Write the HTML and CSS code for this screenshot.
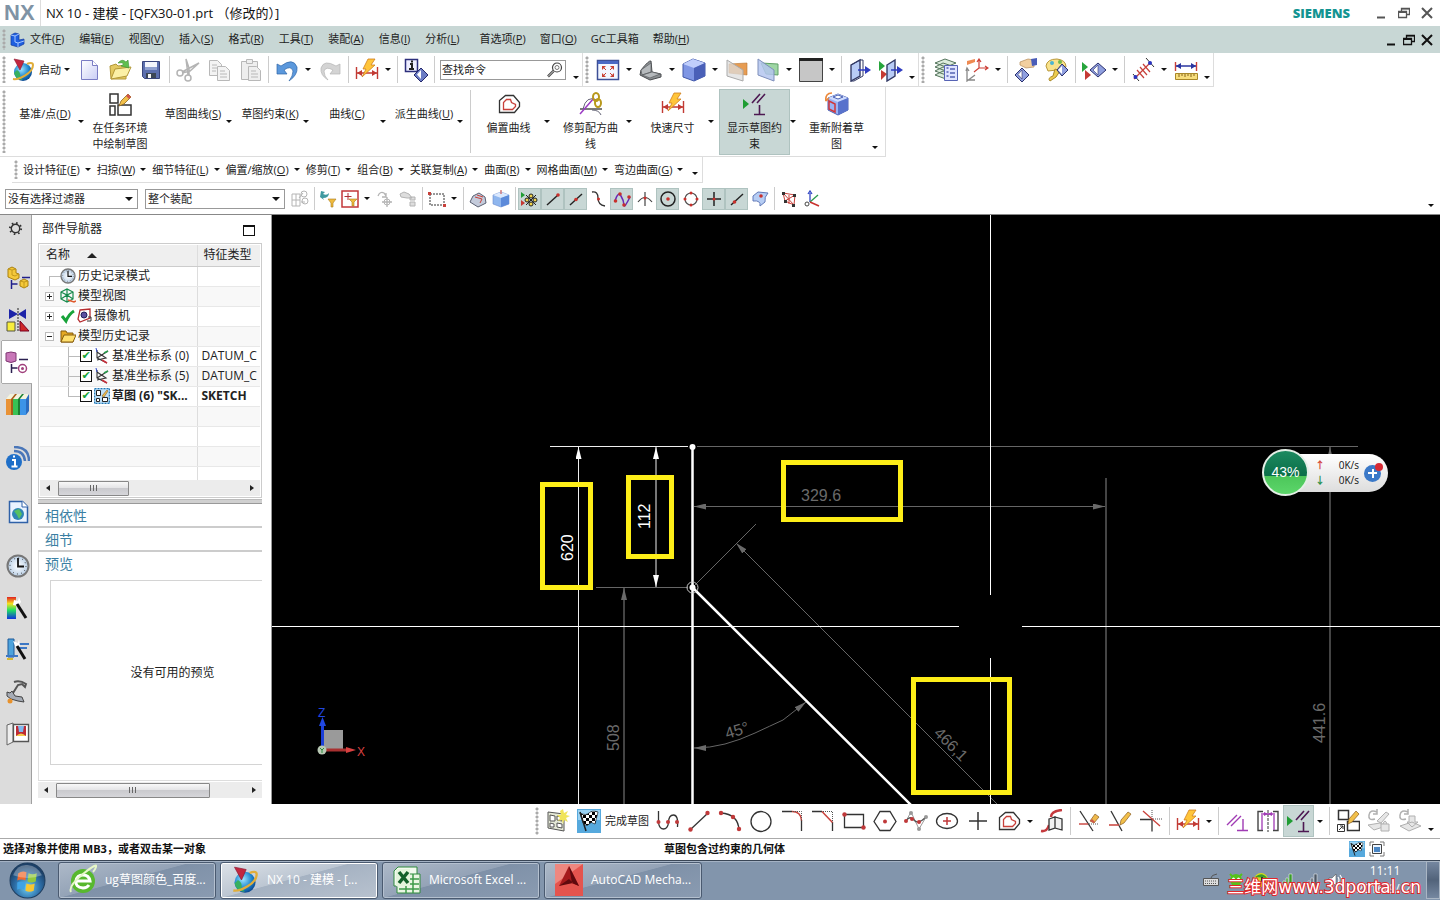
FILE: index.html
```html
<!DOCTYPE html>
<html lang="zh-CN">
<head>
<meta charset="utf-8">
<title>NX 10 - 建模</title>
<link rel="stylesheet" href="styles.css">
</head>
<body>
<svg class="defs" width="0" height="0" aria-hidden="true">
<defs>
<linearGradient id="g-doc" x1="0" y1="0" x2="1" y2="1"><stop offset="0" stop-color="#fff"/><stop offset="1" stop-color="#c9cdf5"/></linearGradient>
<linearGradient id="g-rain" x1="0" y1="0" x2="0" y2="1"><stop offset="0" stop-color="#e02020"/><stop offset=".3" stop-color="#f5e020"/><stop offset=".6" stop-color="#20e060"/><stop offset="1" stop-color="#1030e0"/></linearGradient>
<radialGradient id="g-globe" cx=".4" cy=".35" r=".7"><stop offset="0" stop-color="#9fe6ff"/><stop offset=".6" stop-color="#1d86cf"/><stop offset="1" stop-color="#0a3f85"/></radialGradient>
<radialGradient id="g-start" cx=".5" cy=".7" r=".6"><stop offset="0" stop-color="#6fd0f5"/><stop offset=".6" stop-color="#2d6fa8"/><stop offset="1" stop-color="#1c4068"/></radialGradient>
<radialGradient id="g-clock"><stop offset="0" stop-color="#fff"/><stop offset="1" stop-color="#b9cfe6"/></radialGradient>
<pattern id="p-check" width="6" height="6" patternUnits="userSpaceOnUse"><path fill="#fff" d="M0 0h6v6H0z"/><path d="M0 0h3v3H0zM3 3h3v3H3z"/></pattern>
</defs>
<symbol id="nx" viewBox="0 0 24 24"><circle cx="12" cy="14" r="9" fill="url(#g-globe)"/><path d="M6 12q4 2 3 7l3 3q-7 0-9-7z" fill="#38b060"/><path d="M2 21C8 22 22 15 22 7c0-3-4-2-6-1" fill="none" stroke="#e0ad3a" stroke-width="2"/><path d="M3 1l10 2-4 9z" fill="#c22740" stroke="#8f1730" stroke-width=".6"/></symbol>
<symbol id="part" viewBox="0 0 16 16"><path d="M2 3l4-2 4 1v6l5-1v5l-6 3-7-2z" fill="#1e5fe0" stroke="#143a9c" stroke-width=".7"/><path d="M2 3l4 1 4-2M6 4v6l3 1 6-2M9 11v4" fill="none" stroke="#a6c6ff"/></symbol>
<symbol id="new" viewBox="0 0 24 24"><path d="M4.500 2.500h11l5 5v14h-16z" fill="url(#g-doc)" stroke="#7a7cc4"/><path d="M15.500 2.500v5h5" fill="#fff" stroke="#7a7cc4"/></symbol>
<symbol id="open" viewBox="0 0 24 24"><path d="M2 8l6-2 2 2 8-1v14H3z" fill="#e3c961" stroke="#b39838"/><path d="M3 21l4-10 16-2-4 9z" fill="#fbf0a6" stroke="#b39838"/><path d="M10 5q4-5 8-1l2-2 1 8-8-2 3-2q-2-2-6-1z" fill="#5fbf4f" stroke="#3a8f32" stroke-width=".6"/></symbol>
<symbol id="save" viewBox="0 0 24 24"><path d="M3.500 3.500h17v17h-15l-2-2z" fill="#5c6fae" stroke="#39457c"/><path fill="#f3f5fb" d="M6 4h12v8H6z"/><path fill="#8fa0cf" d="M6 9h12v3H6z"/><path fill="#3c4656" d="M7 15h10v5H7z"/><path fill="#f5f5f5" d="M9 16h3v4H9z"/></symbol>
<symbol id="cut" viewBox="0 0 24 24"><g fill="none" stroke="#b4b4b4" stroke-width="1.500"><circle cx="4" cy="15" r="3"/><circle cx="12" cy="20" r="3"/><path d="M6 14l17-9-9 8-8 2M12 17L10 1l3 9 0 7"/></g></symbol>
<symbol id="copy" viewBox="0 0 24 24"><g fill="#f3f3f3" stroke="#b8b8b8"><path d="M2.500 2.500h8l4 4v11h-12z"/><path d="M10.500 8.500h8l4 4v10h-12z"/><path d="M5 7h5M5 10h5M5 13h4M13 13h5M13 16h7M13 19h7"/></g></symbol>
<symbol id="paste" viewBox="0 0 24 24"><g fill="#eee" stroke="#b8b8b8"><path d="M3.500 3.500h16v18h-16z"/><path d="M8.500 1.500h6v4h-6z"/><path d="M10.500 8.500h8l4 4v10h-12z"/><path d="M13 13h5M13 16h7M13 19h7"/></g></symbol>
<symbol id="undo" viewBox="0 0 24 24"><path d="M2 6v10h10l-3-4q7-5 9 1 0 5-4 10 9-6 8-14Q18-1 6 8z" fill="#5b98dc" stroke="#2f66a8" stroke-width=".7"/></symbol>
<symbol id="redo" viewBox="0 0 24 24"><path d="M22 6v10H12l3-4q-7-4-9 1 0 5 4 9-8-5-7-12Q6 1 18 8z" fill="#d4d4d4" stroke="#b4b4b4" stroke-width=".7"/></symbol>
<symbol id="dim" viewBox="0 0 24 24"><path d="M1.500 9v12M22.500 9v12M2 15h20" stroke="#c23a34" stroke-width="1.400"/><path d="M2 15l5-3v6zM22 15l-5-3v6z" fill="#c23a34"/><path d="M13 1h7l-4 6h4L7 19l4-8H8z" fill="#ffc53a" stroke="#cf7d1c" stroke-width=".8"/></symbol>
<symbol id="info" viewBox="0 0 24 24"><path d="M1.500 1.500h12v12h-12z" fill="#eef" stroke="#2c2f7c" stroke-width="1.500"/><path d="M6 6h2v4M5 11h5M7 3.500h2" fill="none" stroke="#222" stroke-width="2"/><path d="M17 10l7 7-7 7-7-7z" fill="#6b7cc4" stroke="#25286c"/><path d="M17 12v9l-4-4.500z" fill="#fff"/></symbol>
<symbol id="glass" viewBox="0 0 16 16"><circle cx="10" cy="5.500" r="4.500" fill="#fff" stroke="#444" stroke-width="1.200"/><circle cx="10" cy="5.500" r="2" fill="none" stroke="#777"/><path d="M6.500 9L1 14.500" stroke="#444" stroke-width="2.500"/><path d="M6.500 9L1 14.500" stroke="#fff" stroke-width=".8"/></symbol>
<symbol id="fit" viewBox="0 0 24 24"><path d="M1.500 2.500h21v19h-21z" fill="#f2f6ff" stroke="#3d4f96" stroke-width="1.500"/><path fill="#4a69c4" d="M2 3h20v3H2z"/><g stroke="#c84032" fill="#c84032"><path d="M10 12L7 9M14 12l3-3M10 15l-3 3M14 15l3 3"/><path d="M6 8h4l-4 4zM18 8h-4l4 4zM6 19h4l-4-4zM18 19h-4l4-4z" stroke="none"/></g></symbol>
<symbol id="shade" viewBox="0 0 24 24"><path d="M2 12q8-10 10-9l1 11 9 2v3l-11 3L1 17z" fill="#8b8f92" stroke="#4a4d50"/><path d="M2 12l10-7v9L3 17zM13 14l-10 3 8 3 10-4z" fill="#b6babd" stroke="#5a5d60" stroke-width=".7"/></symbol>
<symbol id="cube" viewBox="0 0 24 24"><path d="M1 6l10-5 12 4v13l-11 5L1 19z" fill="#7f96e4" stroke="#4258a8"/><path d="M1 6l11 4 11-5-12-4z" fill="#c0cefc"/><path d="M12 10v13l11-5V5z" fill="#4a60b8"/></symbol>
<symbol id="sec1" viewBox="0 0 24 24"><path d="M4 6l18-1v12l-18-2z" fill="#e79c52" stroke="#b97532" stroke-width=".6"/><path d="M2 2l16 10v11L2 18z" fill="#ddd" fill-opacity=".75" stroke="#aaa"/></symbol>
<symbol id="sec2" viewBox="0 0 24 24"><path d="M5 5l17 1v11l-12-1z" fill="#9ed6a4" stroke="#60a068"/><path d="M2 1l16 11v11L2 17z" fill="#b4c6ee" fill-opacity=".85" stroke="#7f8fbb"/></symbol>
<symbol id="bg" viewBox="0 0 24 24"><path d="M.500.500h23v23H.500z" fill="#c6c6c6" stroke="#444"/><path fill="#222" d="M0 0h24v3H0z"/></symbol>
<symbol id="book" viewBox="0 0 24 24"><path d="M3 7l9-5v16l-9 5z" fill="#b9ccf6" stroke="#333a66" stroke-width="1.400"/><path d="M3 7l9-5h3v16l-9 5H3" fill="none" stroke="#333a66"/><path d="M10 12h8" stroke="#2f3cc0" stroke-width="1.500"/><path d="M17 8l6 4-6 4z" fill="#2f3cc0"/></symbol>
<symbol id="book2" viewBox="0 0 24 24"><path d="M0 3l6 5-6 5z" fill="#27a53c"/><path d="M2 12l6 4-6 6z" fill="#c53a34"/><path d="M8 7l8-5v16l-8 5z" fill="#b9ccf6" stroke="#333a66" stroke-width="1.400"/><path d="M12 12h7" stroke="#2f3cc0" stroke-width="1.500"/><path d="M18 8l6 4-6 4z" fill="#2f3cc0"/></symbol>
<symbol id="layers" viewBox="0 0 24 24"><g fill="#dcecdc" stroke="#54745c"><path d="M1 17l8-4 12 4-9 4zM1 13l8-4 12 4-9 4zM1 9l8-4 12 4-9 4zM1 5l10-4 11 4-10 4z"/></g><path d="M10.500 7.500h13v15h-13z" fill="#dfe4ff" stroke="#5663b4"/><path d="M12.500 10h2M12.500 14h2M12.500 18h2M16 11h5M16 15h5M16 19h5" stroke="#5663b4" stroke-width="1.500"/></symbol>
<symbol id="wcs" viewBox="0 0 24 24"><path d="M2 3l8-2v3l-8 3z" fill="#ee8a52"/><g fill="none" stroke="#cc4038" stroke-width="1.200"><path d="M14 2v8h9M14 10l-5 4M12 4l2-3 2 3M20 8l3 2-3 2"/></g><path d="M2 11v12l8-6M2 22h8M1 13l1-3 2 3" fill="none" stroke="#888" stroke-width="1.300"/></symbol>
<symbol id="hide" viewBox="0 0 24 24"><path d="M6 4l8-3 6 1v7l-8 1-6-3z" fill="#f2cf9f" stroke="#b38a58" stroke-width=".7"/><path d="M17 1l6-1v7l-5 1z" fill="#4a5db8"/><path d="M8 10l7 7-7 7-7-7z" fill="#8f9fdf" stroke="#2b316e"/><path d="M8 12v9l-4-4.500z" fill="#fff" stroke="#2b316e" stroke-width=".6"/></symbol>
<symbol id="pal" viewBox="0 0 24 24"><path d="M1 8q1-7 11-7 9 1 9 8l-9 3-9 1z" fill="#f8e28c" stroke="#b99838"/><circle cx="7" cy="5" r="2" fill="#4ab4d4"/><circle cx="15" cy="4" r="2" fill="#74b84a"/><path d="M10 11l5 2-4 6-6 4q-3-3 3-5z" fill="#eccc50" stroke="#a98828"/><path d="M17 6l6 6-6 6-5-6z" fill="#8f9fdf" stroke="#2b316e"/><path d="M17 8v8l-4-4z" fill="#fff"/></symbol>
<symbol id="showhide" viewBox="0 0 24 24"><path d="M0 4l6 5-6 5z" fill="#27a53c"/><path d="M3 12l6 5-6 5z" fill="#c53a34"/><path d="M16 5l8 7-8 7-8-7z" fill="#8f9fdf" stroke="#2b316e"/><path d="M16 7v10l-5-5z" fill="#fff" stroke="#2b316e" stroke-width=".6"/></symbol>
<symbol id="dist" viewBox="0 0 24 24"><path d="M3 21L20 4M6 12l7 8M9 9l7 8M12 6l7 8" stroke="#c8403a" stroke-width="1.200"/><path d="M2 16l6 7M15 0l8 9" stroke="#333"/><circle cx="4.500" cy="19" r="2" fill="#2a35c0"/><circle cx="19" cy="5" r="2" fill="#2a35c0"/></symbol>
<symbol id="ruler" viewBox="0 0 24 24"><path d="M1.500 4v9M22.500 4v9" stroke="#c8403a" stroke-width="1.400"/><path d="M2 8h20" stroke="#2a35a0" stroke-width="1.500"/><path d="M2 8l5-3v6zM22 8l-5-3v6z" fill="#2a35a0"/><path d="M1.500 15.500h22v6h-22z" fill="#f7dd7c" stroke="#a98828"/><path d="M5 16v3M8 16v2M11 16v3M14 16v2M17 16v3M20 16v2" stroke="#86651a"/></symbol>
<symbol id="sk" viewBox="0 0 24 24"><path d="M2 2h8v9H2zM2 14h5v9H2zM10 13h13v10H10z" fill="#fff" stroke="#333" stroke-width="1.500"/><path d="M11 14l2-5 7-7 3 3-7 7z" fill="#f2c04a" stroke="#8a6420" stroke-width=".8"/><path d="M18 4l2-2 3 3-2 2z" fill="#d0564a"/></symbol>
<symbol id="offset" viewBox="0 0 24 24"><path d="M2.500 20.500v-12l6-5h8l6 7v4l-5 6z" fill="none" stroke="#333" stroke-width="1.300"/><path d="M6.500 17.500v-7l3-3h4l1 3 4 2v2l-3 3z" fill="none" stroke="#c8403a" stroke-width="1.300"/></symbol>
<symbol id="recipe" viewBox="0 0 24 24"><path d="M1 17h22" stroke="#333" stroke-width="1.300"/><path d="M4 17q3-14 14-9M13 18q7 0 9 5" fill="none" stroke="#667"/><path d="M1 22L15 6" stroke="#9b3ac4" stroke-width="1.500"/><g fill="none" stroke="#b8981c" stroke-width="2"><ellipse cx="17" cy="5" rx="3" ry="4"/><ellipse cx="19" cy="11" rx="3" ry="4"/></g></symbol>
<symbol id="cons" viewBox="0 0 24 24"><path d="M0 7l6 5-6 5z" fill="#1f9d33"/><path d="M9 11l8-9M14 11l8-9M16.500 13v9M11 22.500h11" stroke="#4d1852" stroke-width="1.600"/></symbol>
<symbol id="reattach" viewBox="0 0 24 24"><path d="M3 6l10-4 10 4v12l-10 5-10-5z" fill="#9ab2f4" stroke="#4a61b4"/><path d="M3 6l10 4 10-4-10-4z" fill="#cddafd"/><path d="M8 5l5-2 5 2-5 2z" fill="#fff" stroke="#4a61b4"/><path d="M13 10v13l10-5V6z" fill="#5872cc"/><path d="M4 9l6 3v8l-6-3z" fill="none" stroke="#d0363a" stroke-width="1.500"/><path d="M7 1Q0 1 1 9l-1-3M1 9l3-3" fill="none" stroke="#ec8a3c" stroke-width="1.600"/></symbol>
<symbol id="s-mesh" viewBox="0 0 18 18"><g fill="none" stroke="#b4b4b4"><path d="M1 4h8v12H1zM1 10h8M5 4v12M8 8l4-5M10 12h4"/><circle cx="13" cy="4" r="3"/><circle cx="14" cy="11" r="3"/></g></symbol>
<symbol id="s-filt" viewBox="0 0 18 18"><path d="M2 1l4 1-2 2q4 2 6-1 0 5-6 5l1 2-4-3z" fill="#3f9aa0"/><path d="M9 9h8l-3 4v4h-2v-4z" fill="#f0bb3e" stroke="#a87a1c" stroke-width=".6"/></symbol>
<symbol id="s-filt2" viewBox="0 0 18 18"><path d="M1 1h16v16H1z" fill="#fff" stroke="#c2373a" stroke-width="1.500"/><path d="M7 3v7M3.500 6.500h7" stroke="#b02f34"/><path d="M8 9h8l-3 3v4h-2v-4z" fill="#f0bb3e" stroke="#a87a1c" stroke-width=".6"/></symbol>
<symbol id="s-g1" viewBox="0 0 18 18"><path d="M2 6q2-5 6-3l2 3M10 3v4H6M11 7v10M6 12h10" fill="none" stroke="#b4b4b4" stroke-width="1.300"/><circle cx="11" cy="12" r="3" fill="none" stroke="#b4b4b4"/></symbol>
<symbol id="s-g2" viewBox="0 0 18 18"><path d="M1 4l4-2 5 2 3 4H8L2 7zM11 7h5v3h-5zM11 12h5v4h-5z" fill="#ddd" stroke="#b4b4b4"/></symbol>
<symbol id="s-rect" viewBox="0 0 18 18"><path d="M2 4h14v11H2z" fill="none" stroke="#333" stroke-dasharray="2 1"/><path fill="#c8403a" d="M0 2h3v3H0zM15 14h3v3h-3z"/></symbol>
<symbol id="s-cam" viewBox="0 0 18 18"><path d="M1 12l3-6 6-3 6 4 1 6-8 4z" fill="#c4cbdb" stroke="#5a6072"/><path d="M6 7l7 2-2 4M8 5l6 2" stroke="#c8403a" fill="none"/></symbol>
<symbol id="s-cube" viewBox="0 0 18 18"><path d="M1 5l8-3 8 3v9l-8 3-8-3z" fill="#8fb6ee" stroke="#6a8acc" stroke-width=".6"/><path d="M1 5l8 3 8-3-8-3z" fill="#dbe8fd"/><path d="M9 8v9l8-3V5z" fill="#5c8ada"/><path d="M9 0v4" stroke="#c8403a"/></symbol>
<symbol id="s-snap" viewBox="0 0 18 18"><path d="M0 2l4 3-4 3z" fill="#1f9d33"/><path d="M0 10l4 3-4 3z" fill="#c53a34"/><path d="M5 5l10 10M15 5L5 15" stroke="#222"/><g fill="#f3d54a" stroke="#222"><circle cx="10" cy="6" r="2"/><circle cx="10" cy="14" r="2"/><circle cx="6" cy="10" r="2"/><circle cx="14" cy="10" r="2"/></g></symbol>
<symbol id="s-end" viewBox="0 0 18 18"><path d="M3 15L14 5" stroke="#222" stroke-width="1.400"/><circle cx="14" cy="5" r="1.800" fill="#c8302c"/></symbol>
<symbol id="s-mid" viewBox="0 0 18 18"><path d="M3 15L15 4" stroke="#222" stroke-width="1.400"/><circle cx="9" cy="9.500" r="1.800" fill="#c8302c"/></symbol>
<symbol id="s-ctl" viewBox="0 0 18 18"><path d="M2 2q6-1 6 6t7 8" fill="none" stroke="#333" stroke-width="1.300"/><circle cx="8.500" cy="9" r="1.500" fill="#c8302c"/></symbol>
<symbol id="s-pole" viewBox="0 0 18 18"><path d="M2 11q3-10 6-5t3 9 6-8" fill="none" stroke="#6a2ab8" stroke-width="1.500"/><g fill="#c8302c"><circle cx="2.500" cy="11" r="1.800"/><circle cx="7" cy="4" r="1.800"/><circle cx="11" cy="15" r="1.800"/><circle cx="16" cy="7" r="1.800"/></g></symbol>
<symbol id="s-int" viewBox="0 0 18 18"><path d="M9 2v14M2 12q7-9 14 0" fill="none" stroke="#444" stroke-width="1.200"/><circle cx="9" cy="8" r="1.500" fill="#c8302c"/></symbol>
<symbol id="s-arc" viewBox="0 0 18 18"><circle cx="9" cy="9" r="7" fill="none" stroke="#222" stroke-width="1.500"/><circle cx="9" cy="9" r="1.800" fill="#c8302c"/></symbol>
<symbol id="s-quad" viewBox="0 0 18 18"><circle cx="9" cy="9" r="6" fill="none" stroke="#555" stroke-width="1.200"/><g fill="#c8302c"><circle cx="9" cy="3" r="1.500"/><circle cx="9" cy="15" r="1.500"/><circle cx="3" cy="9" r="1.500"/><circle cx="15" cy="9" r="1.500"/></g></symbol>
<symbol id="s-plus" viewBox="0 0 18 18"><path d="M9 2v14M2 9h14" stroke="#222" stroke-width="1.500"/><circle cx="9" cy="9" r="1.500" fill="#c8302c"/></symbol>
<symbol id="s-on" viewBox="0 0 18 18"><path d="M3 15L15 4" stroke="#222" stroke-width="1.400"/><circle cx="6.500" cy="12" r="1.800" fill="#c8302c"/></symbol>
<symbol id="s-face" viewBox="0 0 18 18"><path d="M2 6l5-4 10 1q-4 4-3 9l-5 4q1-6-7-5z" fill="#b6cdf4" stroke="#6079b8"/><circle cx="10" cy="6" r="1.800" fill="#c8302c"/></symbol>
<symbol id="s-net" viewBox="0 0 18 18"><path d="M3 3l11 12M3 3l2 8 9 4 1-10zM5 11l10-6M9 5v9" fill="none" stroke="#c8403a"/><path fill="#333" d="M2 2h3v3H2zM13 4h3v3h-3zM4 10h3v3H4zM12 14h3v3h-3z"/></symbol>
<symbol id="s-csys" viewBox="0 0 18 18"><path d="M7 12V3M5 4l2-3 2 3" fill="none" stroke="#3146c4" stroke-width="1.300"/><path d="M7 12l8-7" stroke="#2a9b4c" stroke-width="1.300"/><path d="M7 12l9 4" stroke="#c8302c" stroke-width="1.500"/><circle cx="4" cy="14" r="2" fill="#fff" stroke="#444"/></symbol>
<symbol id="b-sk" viewBox="0 0 24 24"><path d="M2 3l16 2v17L2 19z" fill="#e4e8d6" stroke="#555"/><path d="M4 6l5 1v5H4zM11 7l5 1v4l-5-1zM4 14l4 1v3H4zM11 14l5 1v4l-5-1z" fill="#fff" stroke="#555"/><path d="M17 0l1 4 4-2-2 4 4 1-4 2 2 4-4-2-1 4-1-4-4 1 2-3-3-3 4 0-1-4z" fill="#f0e45a"/></symbol>
<symbol id="b-fin" viewBox="0 0 24 24"><path fill="#56a9dd" d="M0 0h24v24H0z"/><path fill="#9ad2f2" d="M1 1h22v10H1z"/><path d="M3 4q6 3 9 0t9-1l-3 12q-4-3-6 0t-6-1z" fill="url(#p-check)" stroke="#222" stroke-width=".7"/><path d="M3 3l6 19" stroke="#222" stroke-width="1.500"/></symbol>
<symbol id="b-prof" viewBox="0 0 24 24"><path d="M2.500 2v12q1 6 5 6t5-6q0-8 5-8t4 12" fill="none" stroke="#333" stroke-width="1.300"/><g fill="#c0393a"><circle cx="2.500" cy="13" r="2"/><circle cx="12" cy="13" r="2"/><circle cx="21" cy="13" r="2"/></g></symbol>
<symbol id="b-line" viewBox="0 0 24 24"><path d="M3 21L21 4" stroke="#333" stroke-width="1.300"/><circle cx="3.500" cy="20.500" r="2.200" fill="#c0393a"/><circle cx="20.500" cy="4" r="2.200" fill="#c0393a"/></symbol>
<symbol id="b-arc" viewBox="0 0 24 24"><path d="M3 4q17 1 18 17" fill="none" stroke="#333" stroke-width="1.300"/><g fill="#c0393a"><circle cx="3" cy="4" r="2.200"/><circle cx="15" cy="8" r="2.200"/><circle cx="21" cy="20" r="2.200"/></g></symbol>
<symbol id="b-circ" viewBox="0 0 24 24"><circle cx="12" cy="12.500" r="10" fill="none" stroke="#333" stroke-width="1.300"/></symbol>
<symbol id="b-fil" viewBox="0 0 24 24"><path d="M2 2.500h10M21.500 11v11" stroke="#333" stroke-width="1.300"/><path d="M12 2.500q9 0 9.500 9" fill="none" stroke="#c8403a" stroke-width="1.500"/><path d="M13 2.500h8.500v8" fill="none" stroke="#555" stroke-dasharray="1 1"/></symbol>
<symbol id="b-cham" viewBox="0 0 24 24"><path d="M1 2.500h10M21.500 13v9" stroke="#333" stroke-width="1.300"/><path d="M11 2.500l10.500 11" stroke="#c8403a" stroke-width="1.500"/><path d="M12 2.500h9.500v10" fill="none" stroke="#555" stroke-dasharray="1 1"/></symbol>
<symbol id="b-rect" viewBox="0 0 24 24"><path d="M2.500 5.500h19v13h-19z" fill="none" stroke="#333" stroke-width="1.300"/><circle cx="2.500" cy="5.500" r="2.200" fill="#c0393a"/><circle cx="21.500" cy="18.500" r="2.200" fill="#c0393a"/></symbol>
<symbol id="b-hex" viewBox="0 0 24 24"><path d="M1 12.500l6-10h10l6 10-6 9H7z" fill="none" stroke="#333" stroke-width="1.300"/><circle cx="12" cy="12.500" r="2" fill="#c0393a"/></symbol>
<symbol id="b-spl" viewBox="0 0 24 24"><path d="M2 12l5-9 8 17 7-12" fill="none" stroke="#999"/><path d="M2 12q4-6 8-1t12-3" fill="none" stroke="#555" stroke-width="1.300"/><g fill="#999"><circle cx="7" cy="4" r="2"/><circle cx="15" cy="20" r="2"/><circle cx="22" cy="8" r="2"/></g><g fill="#c0393a"><circle cx="2" cy="12" r="2"/><circle cx="8" cy="10" r="2"/><circle cx="15" cy="13" r="2"/></g></symbol>
<symbol id="b-ell" viewBox="0 0 24 24"><ellipse cx="12" cy="12" rx="10.500" ry="7.500" fill="none" stroke="#333" stroke-width="1.300"/><path d="M12 8v8M8 12h8" stroke="#c0393a" stroke-width="1.500"/></symbol>
<symbol id="b-pt" viewBox="0 0 24 24"><path d="M12 3v18M3 12h18" stroke="#333" stroke-width="1.500"/></symbol>
<symbol id="b-proj" viewBox="0 0 24 24"><path d="M11 8q0-6 11-7M1 22q6 1 8-6" fill="none" stroke="#c53a3e" stroke-width="2.500"/><path d="M9 10l6-2v11l-6 2zM15 8l7 2v11l-7-2z" fill="#f2f2f2" stroke="#333" stroke-width="1.300"/></symbol>
<symbol id="b-trim" viewBox="0 0 24 24"><path d="M3 2l13 20" stroke="#333" stroke-width="1.300"/><path d="M2 15h9" stroke="#c8403a" stroke-width="1.400"/><path d="M12 15h10" stroke="#555" stroke-dasharray="1 1"/><path d="M13 12l5-7 4 3-5 6z" fill="#eeb94c" stroke="#8a5c20" stroke-width=".7"/><path d="M13 12l2-2 3 3-1 1z" fill="#d0564a"/></symbol>
<symbol id="b-ext" viewBox="0 0 24 24"><path d="M3 2l11 20" stroke="#333" stroke-width="1.300"/><path d="M1 16h10" stroke="#c8403a" stroke-width="1.500"/><path d="M12 16l1-5 7-8 3 2-7 9z" fill="#f2c04a" stroke="#8a5c20" stroke-width=".7"/></symbol>
<symbol id="b-cor" viewBox="0 0 24 24"><path d="M1 10.500h12v12" fill="none" stroke="#333" stroke-width="1.300"/><path d="M13 1v9h10" fill="none" stroke="#555" stroke-dasharray="1 1"/><path d="M4 2l17 15" stroke="#c8403a" stroke-width="1.300"/></symbol>
<symbol id="b-geo" viewBox="0 0 24 24"><path d="M2 16L12 6M6 17L16 7M18 10v11M12 21.500h11" stroke="#a03bb4" stroke-width="1.400"/></symbol>
<symbol id="b-sym" viewBox="0 0 24 24"><path d="M7 2.500H2v19h5M17 2.500h5v19h-5" fill="none" stroke="#444" stroke-width="1.400"/><path d="M12 1v22" stroke="#333" stroke-dasharray="3 1"/><path d="M6 4v17M18 4v17M7 5h10" stroke="#a03bb4" stroke-width="1.300"/><path d="M12 5L8 3v4zM12 5l4-2v4z" fill="#a03bb4"/></symbol>
<symbol id="b-upd" viewBox="0 0 24 24"><path d="M2.500 1.500h10v9h-10zM11.500 12.500h12v9h-12z" fill="#fff" stroke="#333" stroke-width="1.500"/><path d="M1.500 15.500h7v7h-7z" fill="#fff" stroke="#333"/><path d="M3 21l4-4M4 17h3v3" stroke="#333" fill="none"/><path d="M12 15l1-5 7-8 3 3-7 8z" fill="#f2c04a" stroke="#8a5c20" stroke-width=".7"/></symbol>
<symbol id="b-g1" viewBox="0 0 24 24"><g fill="#e6e6e6" stroke="#b0b0b0"><path d="M10 3Q3 0 2 6t6 4M10 0v5H6" fill="none" stroke-width="1.500"/><path d="M1 16l12-2 6 3-12 4zM10 12l9-9 3 2-8 9z"/><path d="M14 15h8v7h-8zM16 15q2-6 4 0"/></g></symbol>
<symbol id="b-g2" viewBox="0 0 24 24"><g fill="#e6e6e6" stroke="#b0b0b0"><path d="M10 3Q3 0 2 6t6 4M10 0v5H6" fill="none" stroke-width="1.500"/><path d="M2 17l12-4 9 4-12 5zM11 7h6v6h3l-6 5-5-5h2z"/></g></symbol>
<symbol id="gear" viewBox="0 0 16 16"><circle cx="8" cy="8" r="4.500" fill="none" stroke="#333" stroke-width="1.500"/><circle cx="8" cy="8" r="6" fill="none" stroke="#333" stroke-width="2" stroke-dasharray="1.700 3"/></symbol>
<symbol id="r-asm" viewBox="0 0 24 24"><path d="M2 3l4-2 4 2v4l3 1v4l-4 2-7-3zM14 15l4-2 4 2v5l-4 2-4-2z" fill="#f5c93a" stroke="#a9800f"/><path d="M2 3l4 1 4-1M6 4v5l3 1 4-2M14 15l4 1 4-1M18 16v6" fill="none" stroke="#c49a1c"/><path d="M5.500 14v9M5.500 18h6M16 11.500h8" stroke="#20208c" stroke-width="1.500"/></symbol>
<symbol id="r-con" viewBox="0 0 24 24"><path d="M3 1v10l9-5zM20 1v10l-8-5z" fill="#1d24a8"/><path d="M12 0v24" stroke="#222" stroke-dasharray="2 1"/><path d="M1 14h8v9H1z" fill="#f8ee3c" stroke="#554"/><path d="M14 13l9 10h-9z" fill="#cf2727" stroke="#702"/></symbol>
<symbol id="r-nav" viewBox="0 0 24 24"><path d="M1 3q5-2 10 0v8q-5 3-10 0z" fill="#c877b8" stroke="#803a74"/><path d="M6.500 14v9M6.500 18h6M14 9.500h9" stroke="#2b2050" stroke-width="1.500"/><circle cx="17.500" cy="18.500" r="4" fill="#fff" stroke="#a0407c" stroke-width="1.500"/><circle cx="17.500" cy="18.500" r="1.500" fill="#a0407c"/></symbol>
<symbol id="r-books" viewBox="0 0 24 24"><path d="M0 7h6v16H0z" fill="#e99236"/><path d="M7 7h6v16H7z" fill="#39c254"/><path d="M14 7h6v16h-6z" fill="#3c94e8"/><path d="M0 7l4-5h19l-3 5z" fill="#f3f3dd"/><path d="M5 7l4-5 2 0-4 5v16H5z" fill="#a85c18"/><path d="M12 7l4-5 2 0-4 5v16h-2z" fill="#1a8034"/><path d="M20 7l3-5v17l-3 4z" fill="#2a6cc0"/></symbol>
<symbol id="r-info" viewBox="0 0 24 24"><circle cx="8" cy="16" r="8" fill="#1f6fc8"/><path d="M6 14h3v6M5.500 20.500h6M7 10.500h2" fill="none" stroke="#fff" stroke-width="2"/><path d="M8 1q15 0 15 14M8 5q10 0 11 10" fill="none" stroke="#4a76b8" stroke-width="2.500"/></symbol>
<symbol id="r-web" viewBox="0 0 24 24"><path d="M3.500 1.500h13l5 5v16h-18z" fill="#eaf3ff" stroke="#2f61a8" stroke-width="1.500"/><path d="M16 1v6h6" fill="#fff" stroke="#2f61a8"/><circle cx="12" cy="14" r="6" fill="#2f86b4"/><path d="M8 11l5-2 3 5-3 5-2-4z" fill="#57c060"/></symbol>
<symbol id="clock" viewBox="0 0 24 24"><circle cx="12" cy="12" r="10.500" fill="url(#g-clock)" stroke="#777" stroke-width="2"/><path d="M12 4v8.500h6" fill="none" stroke="#111" stroke-width="1.800"/><circle cx="12" cy="12" r="8" fill="none" stroke="#333" stroke-dasharray="1 3.190"/></symbol>
<symbol id="r-col" viewBox="0 0 24 24"><path fill="url(#g-rain)" d="M1 1h9v22H1z"/><path d="M8 4l4 1 1-4 2 5-3 4-5-1z" fill="#fff"/><path d="M11 8l9 14" stroke="#111" stroke-width="3"/></symbol>
<symbol id="r-fem" viewBox="0 0 24 24"><path d="M2 1h6v18H2z" fill="#4da3dc" stroke="#1e5a9a"/><path d="M10 6h13M12 10h9M0 18h12" stroke="#3c77c4" stroke-width="2"/><path d="M1 21h6" stroke="#d8b830" stroke-width="2"/><path d="M7 3l5 2 1-4 1 7-4 2z" fill="#fff"/><path d="M11 8l8 13" stroke="#111" stroke-width="3"/></symbol>
<symbol id="r-tool" viewBox="0 0 24 24"><path d="M8 2q6-2 12 2l-1 3-3-3-4 1-5 8" fill="none" stroke="#555" stroke-width="2"/><path d="M1 12l3 1 2-2 3 5 7 1 2 5-6-1-7-2-4-3z" fill="#a6acb6" stroke="#444"/><circle cx="4" cy="21" r="2.500" fill="#e8922c"/></symbol>
<symbol id="r-role" viewBox="0 0 24 24"><path d="M1 3l6-2v19l-6 3z" fill="#eee" stroke="#666"/><path d="M7.500 2.500h15v17h-15z" fill="#fff" stroke="#555" stroke-width="1.300"/><path fill="#bd2b35" d="M10 4h10v10H10z"/><path d="M12 4h6l-1 6h-4z" fill="#80b8ee"/><path d="M10 14q5-5 10 0z" fill="#f5c94a"/></symbol>
<symbol id="t-view" viewBox="0 0 16 16"><path d="M1 4l6-3 6 3v7l-6 3-6-3zM1 4l6 3 6-3M7 7v7M7 1v6l6 4M7 7l-6 4" fill="none" stroke="#168a4c" stroke-width="1.200"/><path d="M8 12l6 2 2-1" stroke="#e0582c" stroke-width="1.500" fill="none"/></symbol>
<symbol id="tick" viewBox="0 0 16 16"><path d="M2 8l4 5q3-7 8-10" fill="none" stroke="#18a33a" stroke-width="3"/></symbol>
<symbol id="t-cam" viewBox="0 0 16 16"><path d="M4 2l10-1v9l-10 4-2-3z" fill="#fff" stroke="#b52c30" stroke-width="1.300"/><circle cx="8" cy="7" r="3" fill="#5b50a0" stroke="#22205c"/><path d="M12 9h3v4h-4" fill="none" stroke="#333"/></symbol>
<symbol id="t-fold" viewBox="0 0 16 16"><path d="M1 3h5l1 2h6v9H1z" fill="#e5a923" stroke="#875c0c"/><path d="M1 14l3-7h12l-3 7z" fill="#ffe06e" stroke="#875c0c"/></symbol>
<symbol id="t-csys" viewBox="0 0 16 16"><path d="M3 2v8l10 5M3 10l11-7M3 4l9 6-9 2" fill="none" stroke="#333" stroke-width="1.100"/><path d="M8 12l5 3" stroke="#c8303c" stroke-width="1.500"/><path d="M10 5l4-2" stroke="#2a9b4c" stroke-width="1.800"/><path d="M2 0l1 4" stroke="#3146c4"/></symbol>
<symbol id="t-sk" viewBox="0 0 16 16"><path d="M.500.500h15v15H.500z" fill="#bfe0f7" stroke="#2078b8" stroke-width="1.500" stroke-dasharray="2 1"/><path d="M2.500 2.500h4v5h-4zM2.500 10.500h3v3h-3zM8.500 9.500h5v4h-5z" fill="#fff" stroke="#222"/><path d="M8 8l5-6 1 1-4 6z" fill="#f2c04a" stroke="#8a5c20" stroke-width=".6"/></symbol>
<symbol id="full" viewBox="0 0 16 16"><path d="M1 5V1h4M11 1h4v4M15 11v4h-4M5 15H1v-4" fill="none" stroke="#777"/><path d="M3.500 3.500h9v9h-9z" fill="#eef6ff" stroke="#444"/><path fill="#4a86c4" d="M5 6h6v5H5z"/></symbol>
<symbol id="w-start" viewBox="0 0 36 36"><circle cx="18" cy="18" r="17" fill="url(#g-start)" stroke="#1e3d5e"/><path d="M9 11q4-3 8-1l-1 8q-4-2-8 0z" fill="#ef6a2f"/><path d="M19 11q4 2 8 0l-1 8q-4 2-8 0z" fill="#92c83e"/><path d="M8 20q4-2 8 0l-1 7q-4-2-7 0z" fill="#3fa3e6"/><path d="M17 21q4 2 8 0l-1 7q-4 2-8 0z" fill="#f8c732"/><path d="M4 13Q8 2 18 3t14 10q-14 5-28 0z" fill="#fff" opacity=".3"/></symbol>
<symbol id="w-ie" viewBox="0 0 28 28"><circle cx="14" cy="15" r="12" fill="#58b82e"/><path d="M8 15h13q-1-6-7-6t-7 6 7 7q4 0 6-3" fill="none" stroke="#fff" stroke-width="3"/><path d="M2 26Q-1 20 14 8T27 1q-1 3-3 5" fill="none" stroke="#e6f7c8" stroke-width="2"/></symbol>
<symbol id="w-xl" viewBox="0 0 28 28"><path d="M5 1h19v19H1V5z" fill="#f2faef" stroke="#2e8a3c"/><path d="M13 8h14v19H4v-6" fill="#eaf6e4" stroke="#2e8a3c"/><path d="M13 13h13M8 18h18M6 23h20M20 8v19M13 18v9" stroke="#3d9a48" stroke-width="1.500"/><path d="M3 3h14v17H3z" fill="#e4f4dc"/><path d="M6 6l9 11M15 6L6 17" stroke="#14602a" stroke-width="3.500"/></symbol>
<symbol id="w-acad" viewBox="0 0 28 32"><path fill="#e4544e" d="M0 0h28v32H0z"/><path fill="#f8b9b0" opacity=".5" d="M0 0h28L0 20z"/><path d="M14 2L4 22l10-4zM14 2l10 20-10-4z" fill="#a51a1c"/><path d="M14 2l3 17 7 3zM4 22l10-7 4 4z" fill="#5f0a0e"/></symbol>
<symbol id="w-kb" viewBox="0 0 16 14"><path d="M.500 5.500h15v7H.500z" fill="#ddd" stroke="#555"/><path d="M2 8h12M2 10.500h12" stroke="#555" stroke-dasharray="1 1"/><path d="M8 5q0-3 6-4" fill="none" stroke="#555"/></symbol>
<symbol id="w-bars" viewBox="0 0 14 14"><path d="M1 11h2v3H1zM4 8h2v6H4zM7 5h2v9H7zM10 1h3v13h-3z" fill="currentColor" stroke="#fff" stroke-width=".5"/></symbol>
<symbol id="w-snd" viewBox="0 0 16 14"><path d="M1 5h3l4-4v12L4 9H1z" fill="#fff" stroke="#555" stroke-width=".6"/><path d="M10 4q2 3 0 6M12 2q4 5 0 10" fill="none" stroke="#fff" stroke-width="1.200"/></symbol>
<symbol id="restore" viewBox="0 0 12 12"><path d="M3.500 4V1.500h8v6H9M.500 4.500h8v6h-8z" fill="none" stroke="currentColor" stroke-width="1.300"/><path d="M.500 5.500h8M3.500 2h8" stroke="currentColor"/></symbol>
<symbol id="close" viewBox="0 0 12 12"><path d="M1 1l10 10M11 1L1 11" stroke="currentColor" stroke-width="2"/></symbol>
<symbol id="min" viewBox="0 0 12 12"><path d="M2 10.500h8" stroke="currentColor" stroke-width="2"/></symbol>
</svg>

<header class="titlebar">
  <span class="logo">NX</span>
  <h1 class="title">NX 10 - 建模 - [QFX30-01.prt （修改的）]</h1>
  <span class="brand">SIEMENS</span>
  <div class="winctl"><button aria-label="最小化"><svg><use href="#min"/></svg></button><button aria-label="还原"><svg><use href="#restore"/></svg></button><button aria-label="关闭"><svg><use href="#close"/></svg></button></div>
</header>
<nav class="menubar">
  <i class="grip"></i><svg class="part"><use href="#part"/></svg>
  <button>文件(<u>F</u>)</button><button>编辑(<u>E</u>)</button><button>视图(<u>V</u>)</button><button>插入(<u>S</u>)</button><button>格式(<u>R</u>)</button><button>工具(<u>T</u>)</button><button>装配(<u>A</u>)</button><button>信息(<u>I</u>)</button><button>分析(<u>L</u>)</button><button class="wide">首选项(<u>P</u>)</button><button>窗口(<u>O</u>)</button><button>GC工具箱</button><button>帮助(<u>H</u>)</button>
  <div class="winctl doc"><button aria-label="最小化"><svg><use href="#min"/></svg></button><button aria-label="还原"><svg><use href="#restore"/></svg></button><button aria-label="关闭"><svg><use href="#close"/></svg></button></div>
</nav>

<div class="row">
  <div class="group std pad">
    <i class="grip"></i>
    <button class="launch"><svg><use href="#nx"/></svg>启动</button><button class="dd" aria-label="更多"></button>
    <button class="tb"><svg><use href="#new"/></svg></button><button class="tb"><svg><use href="#open"/></svg></button><button class="tb"><svg><use href="#save"/></svg></button><i class="sep"></i>
    <button class="tb"><svg><use href="#cut"/></svg></button><button class="tb"><svg><use href="#copy"/></svg></button><button class="tb"><svg><use href="#paste"/></svg></button><i class="sep"></i>
    <button class="tb"><svg><use href="#undo"/></svg></button><button class="dd" aria-label="更多"></button><button class="tb"><svg><use href="#redo"/></svg></button><i class="sep"></i>
    <button class="tb"><svg><use href="#dim"/></svg></button><button class="dd" aria-label="更多"></button><i class="sep"></i>
    <button class="tb"><svg><use href="#info"/></svg></button><i class="sep"></i>
    <label class="search"><input type="text" value="查找命令" aria-label="查找命令"><svg><use href="#glass"/></svg></label><button class="dd low" aria-label="更多"></button>
  </div>
  <div class="group std">
    <i class="grip"></i>
    <button class="tb"><svg><use href="#fit"/></svg></button><button class="dd" aria-label="更多"></button><button class="tb"><svg><use href="#shade"/></svg></button><button class="dd" aria-label="更多"></button><button class="tb"><svg><use href="#cube"/></svg></button><button class="dd" aria-label="更多"></button><button class="tb"><svg><use href="#sec1"/></svg></button><button class="tb"><svg><use href="#sec2"/></svg></button><button class="dd" aria-label="更多"></button><button class="tb"><svg><use href="#bg"/></svg></button><button class="dd" aria-label="更多"></button><i class="sep"></i>
    <button class="tb"><svg><use href="#book"/></svg></button><button class="tb"><svg><use href="#book2"/></svg></button><button class="dd low" aria-label="更多"></button>
  </div>
  <div class="group std pad">
    <i class="grip"></i>
    <button class="tb"><svg><use href="#layers"/></svg></button><button class="tb"><svg><use href="#wcs"/></svg></button><button class="dd" aria-label="更多"></button><i class="sep"></i>
    <button class="tb"><svg><use href="#hide"/></svg></button><button class="tb"><svg><use href="#pal"/></svg></button><i class="sep"></i>
    <button class="tb"><svg><use href="#showhide"/></svg></button><button class="dd" aria-label="更多"></button><i class="sep"></i>
    <button class="tb"><svg><use href="#dist"/></svg></button><button class="dd" aria-label="更多"></button><button class="tb"><svg><use href="#ruler"/></svg></button><button class="dd low" aria-label="更多"></button>
  </div>
</div>

<div class="row">
  <div class="group big">
    <i class="grip"></i>
    <button class="bt">基准/点(<u>D</u>)</button><button class="dd" aria-label="更多"></button>
    <button class="bi env"><svg><use href="#sk"/></svg>在任务环境中绘制草图</button>
    <button class="bt">草图曲线(<u>S</u>)</button><button class="dd" aria-label="更多"></button>
    <button class="bt">草图约束(<u>K</u>)</button><button class="dd" aria-label="更多"></button>
    <button class="bt">曲线(<u>C</u>)</button><button class="dd" aria-label="更多"></button>
    <button class="bt">派生曲线(<u>U</u>)</button><button class="dd" aria-label="更多"></button>
    <i class="sep"></i>
    <button class="bi"><svg><use href="#offset"/></svg>偏置曲线</button><button class="dd" aria-label="更多"></button>
    <button class="bi"><svg><use href="#recipe"/></svg>修剪配方曲线</button><button class="dd" aria-label="更多"></button>
    <button class="bi"><svg><use href="#dim"/></svg>快速尺寸</button><button class="dd" aria-label="更多"></button>
    <button class="bi on"><svg><use href="#cons"/></svg>显示草图约束</button><button class="dd" aria-label="更多"></button>
    <button class="bi"><svg><use href="#reattach"/></svg>重新附着草图</button><button class="dd end" aria-label="更多"></button>
  </div>
</div>

<div class="row">
  <div class="group feat">
    <i class="grip"></i>
    <button>设计特征(<u>E</u>)</button><button>扫掠(<u>W</u>)</button><button>细节特征(<u>L</u>)</button><button>偏置/缩放(<u>O</u>)</button><button>修剪(<u>T</u>)</button><button>组合(<u>B</u>)</button><button>关联复制(<u>A</u>)</button><button>曲面(<u>R</u>)</button><button>网格曲面(<u>M</u>)</button><button>弯边曲面(<u>G</u>)</button><i class="dd low"></i>
  </div>
</div>

<div class="selbar">
  <label class="combo c1"><select aria-label="选择过滤器"><option>没有选择过滤器</option></select></label>
  <label class="combo c2"><select aria-label="选择范围"><option>整个装配</option></select></label>
  <button class="sb"><svg><use href="#s-mesh"/></svg></button><i class="sep"></i>
  <button class="sb slim"><svg><use href="#s-filt"/></svg></button><button class="sb slim"><svg><use href="#s-filt2"/></svg></button><button class="dd" aria-label="更多"></button><button class="sb"><svg><use href="#s-g1"/></svg></button><button class="sb"><svg><use href="#s-g2"/></svg></button><i class="sep"></i>
  <button class="sb"><svg><use href="#s-rect"/></svg></button><button class="dd" aria-label="更多"></button><i class="sep"></i>
  <button class="sb"><svg><use href="#s-cam"/></svg></button><button class="sb"><svg><use href="#s-cube"/></svg></button><i class="sep"></i>
  <button class="sb on"><svg><use href="#s-snap"/></svg></button><button class="sb on"><svg><use href="#s-end"/></svg></button><button class="sb on"><svg><use href="#s-mid"/></svg></button><button class="sb"><svg><use href="#s-ctl"/></svg></button><button class="sb on"><svg><use href="#s-pole"/></svg></button><button class="sb"><svg><use href="#s-int"/></svg></button><button class="sb on"><svg><use href="#s-arc"/></svg></button><button class="sb"><svg><use href="#s-quad"/></svg></button><button class="sb on"><svg><use href="#s-plus"/></svg></button><button class="sb on"><svg><use href="#s-on"/></svg></button><button class="sb"><svg><use href="#s-face"/></svg></button><i class="sep"></i>
  <button class="sb"><svg><use href="#s-net"/></svg></button><button class="sb"><svg><use href="#s-csys"/></svg></button>
  <button class="dd low last" aria-label="更多"></button>
</div>

<main class="work">
  <nav class="resbar">
    <button class="gear" aria-label="设置"><svg><use href="#gear"/></svg></button>
    <div class="resgroup"><button><svg><use href="#r-asm"/></svg></button><button><svg><use href="#r-con"/></svg></button><button class="on"><svg><use href="#r-nav"/></svg></button><button><svg><use href="#r-books"/></svg></button></div>
    <div class="resgroup"><button><svg><use href="#r-info"/></svg></button></div>
    <div class="resgroup"><button><svg><use href="#r-web"/></svg></button></div>
    <div class="resgroup"><button><svg><use href="#clock"/></svg></button><button><svg><use href="#r-col"/></svg></button><button><svg><use href="#r-fem"/></svg></button><button><svg><use href="#r-tool"/></svg></button><button><svg><use href="#r-role"/></svg></button></div>
  </nav>
  <aside class="panel">
    <div class="phead"><h2>部件导航器</h2><button class="maxi" aria-label="最大化"></button></div>
    <div class="treebox">
      <table class="tree">
        <thead><tr><th>名称 <i class="asc"></i></th><th>特征类型</th></tr></thead>
        <tbody>
          <tr><td><div class="node l1"><i class="ln first"></i><svg><use href="#clock"/></svg>历史记录模式</div></td><td></td></tr>
          <tr><td><div class="node l1"><i class="ex plus"></i><svg><use href="#t-view"/></svg>模型视图</div></td><td></td></tr>
          <tr><td><div class="node l1"><i class="ex plus"></i><svg><use href="#tick"/></svg><svg><use href="#t-cam"/></svg>摄像机</div></td><td></td></tr>
          <tr><td><div class="node l1"><i class="ex"></i><svg><use href="#t-fold"/></svg>模型历史记录</div></td><td></td></tr>
          <tr><td><div class="node l2"><i class="ln"></i><input type="checkbox" checked id="n1"><svg><use href="#t-csys"/></svg><label for="n1">基准坐标系 (0)</label></div></td><td>DATUM_C</td></tr>
          <tr><td><div class="node l2"><i class="ln"></i><input type="checkbox" checked id="n2"><svg><use href="#t-csys"/></svg><label for="n2">基准坐标系 (5)</label></div></td><td>DATUM_C</td></tr>
          <tr class="cur"><td><div class="node l2"><i class="ln final"></i><input type="checkbox" checked id="n3"><svg><use href="#t-sk"/></svg><label for="n3">草图 (6) "SK...</label></div></td><td>SKETCH</td></tr>
          <tr><td></td><td></td></tr><tr><td></td><td></td></tr><tr><td></td><td></td></tr><tr class="short"><td></td><td></td></tr>
        </tbody>
      </table>
      <div class="scroll"><i class="left"></i><span class="thumb t1"></span><i class="right"></i></div>
    </div>
    <div class="splitter"></div>
    <h3 class="sect">相依性</h3>
    <h3 class="sect">细节</h3>
    <section class="preview"><h3 class="sect bare">预览</h3><div class="pbox">没有可用的预览</div></section>
    <div class="scroll"><i class="left"></i><span class="thumb t2"></span><i class="right"></i></div>
  </aside>
  <div class="canvas">
    <svg class="drawing" viewBox="272 215 1168 589" preserveAspectRatio="xMinYMin slice">
      <defs>
        <marker id="aw" viewBox="0 0 12 6" markerWidth="12" markerHeight="6" refX="12" refY="3" orient="auto-start-reverse" markerUnits="userSpaceOnUse"><path d="M0 0l12 3L0 6z" fill="#fff"/></marker>
        <marker id="ag" viewBox="0 0 12 6" markerWidth="12" markerHeight="6" refX="12" refY="3" orient="auto-start-reverse" markerUnits="userSpaceOnUse"><path d="M0 0l12 3L0 6z" fill="#6a6a6a"/></marker>
      </defs>
      <g class="dimline">
        <path d="M697 446.500H1358M596 587.500h92M693 587l63-63"/>
        <path d="M694 506.500h411" marker-start="url(#ag)" marker-end="url(#ag)"/>
        <path d="M736 543l270 270" marker-start="url(#ag)"/>
        <path d="M694 748q16 0 31-4t30-11q15-7 28-13l23-18" marker-start="url(#ag)" marker-end="url(#ag)"/>
        <path class="dense" d="M1106 478v326"/>
        <path class="dense" d="M624 588v240" marker-start="url(#ag)"/>
        <path class="dense" d="M1330 447v360" marker-start="url(#ag)"/>
      </g>
      <g class="lit">
        <path d="M550 446.500h138"/>
        <path d="M578.500 447v400" marker-start="url(#aw)"/>
        <path d="M656 447v140" marker-start="url(#aw)" marker-end="url(#aw)"/>
      </g>
      <path class="cross" d="M990.500 215v380M990.500 658v146M272 626.500h687M1022 626.500h418"/>
      <path class="thick" d="M692.500 447v357M692.500 587.500L912 806"/>
      <circle cx="692.500" cy="447" r="3" fill="#fff"/><circle cx="692.500" cy="587.500" r="3" fill="#fff"/><circle cx="692.500" cy="587.500" r="5.500" fill="none" stroke="#ccc"/>
      <g class="num">
        <text x="801" y="501">329.6</text>
        <text class="lit-t" transform="translate(573 561) rotate(-90)">620</text>
        <text class="lit-t" transform="translate(650 529) rotate(-90)">112</text>
        <text transform="translate(619 751) rotate(-90)">508</text>
        <text transform="translate(1325 743) rotate(-90)">441.6</text>
        <text transform="translate(727 739) rotate(-17)">45°</text>
        <text transform="translate(933 734) rotate(45)">466,1</text>
      </g>
      <g class="mark"><path d="M542.500 484.500h48v103h-48zM628.500 477.500h43v79h-43zM783.500 462.500h117v57h-117zM913.500 679.500h96v113h-96z"/></g>
      <g class="triad"><path d="M324 730h19v20h-19z" fill="#9a9a9a"/><path d="M322.500 749v-26" stroke="#1c3fd8" stroke-width="3"/><path d="M319 726l3.500-9 3.500 9z" fill="#2147e0"/><path d="M324 750h24" stroke="#a83030" stroke-width="3"/><path d="M346 747l10 3-10 3z" fill="#d84040"/><circle cx="322" cy="750" r="4.500" fill="#b8c8b4"/><path d="M320 748l2 2 2-2M322 750v3" fill="none" stroke="#2c8a3c"/><text x="318" y="717" fill="#2147e0">Z</text><text x="357" y="756" fill="#d84040">X</text></g>
    </svg>
    <div class="speed">
      <span class="ball">43%</span>
      <div class="rates"><p><b class="up">↑</b><span>0K/s</span></p><p><b class="down">↓</b><span>0K/s</span></p></div>
      <button class="boost" aria-label="加速"></button>
    </div>
  </div>
</main>

<div class="bottombar">
  <i class="grip"></i>
  <button class="tb"><svg><use href="#b-sk"/></svg></button><button class="finish"><svg><use href="#b-fin"/></svg>完成草图</button>
  <button class="tb"><svg><use href="#b-prof"/></svg></button><button class="tb"><svg><use href="#b-line"/></svg></button><button class="tb"><svg><use href="#b-arc"/></svg></button><button class="tb"><svg><use href="#b-circ"/></svg></button><button class="tb"><svg><use href="#b-fil"/></svg></button><button class="tb"><svg><use href="#b-cham"/></svg></button><button class="tb"><svg><use href="#b-rect"/></svg></button><button class="tb"><svg><use href="#b-hex"/></svg></button><button class="tb"><svg><use href="#b-spl"/></svg></button><button class="tb"><svg><use href="#b-ell"/></svg></button><button class="tb"><svg><use href="#b-pt"/></svg></button><button class="tb"><svg><use href="#offset"/></svg></button><button class="dd" aria-label="更多"></button><button class="tb"><svg><use href="#b-proj"/></svg></button><i class="sep"></i>
  <button class="tb"><svg><use href="#b-trim"/></svg></button><button class="tb"><svg><use href="#b-ext"/></svg></button><button class="tb"><svg><use href="#b-cor"/></svg></button><i class="sep"></i>
  <button class="tb"><svg><use href="#dim"/></svg></button><button class="dd" aria-label="更多"></button><i class="sep"></i>
  <button class="tb"><svg><use href="#b-geo"/></svg></button><button class="tb"><svg><use href="#b-sym"/></svg></button><button class="tb on"><svg><use href="#cons"/></svg></button><button class="dd" aria-label="更多"></button><i class="sep"></i>
  <button class="tb"><svg><use href="#b-upd"/></svg></button><button class="tb"><svg><use href="#b-g1"/></svg></button><button class="tb"><svg><use href="#b-g2"/></svg></button><button class="dd low" aria-label="更多"></button>
</div>
<div class="status">
  <p>选择对象并使用 MB3，或者双击某一对象</p><p>草图包含过约束的几何体</p>
  <div class="sicons"><svg><use href="#b-fin"/></svg><svg><use href="#full"/></svg></div>
</div>
<footer class="taskbar">
  <button class="start" aria-label="开始"><svg><use href="#w-start"/></svg></button>
  <button class="task"><svg><use href="#w-ie"/></svg><span>ug草图颜色_百度...</span></button>
  <button class="task active"><svg><use href="#nx"/></svg><span>NX 10 - 建模 - [...</span></button>
  <button class="task"><svg><use href="#w-xl"/></svg><span>Microsoft Excel ...</span></button>
  <button class="task"><svg><use href="#w-acad"/></svg><span>AutoCAD Mecha...</span></button>
  <div class="tray">
    <svg><use href="#w-kb"/></svg>
    <svg viewBox="0 0 16 14"><circle cx="8" cy="7" r="6" fill="#56c21c"/><path d="M2 1l3 3M14 1l-3 3" stroke="#56c21c" stroke-width="2"/><circle cx="5.500" cy="6" r="1.500" fill="#fff"/><circle cx="10.500" cy="6" r="1.500" fill="#fff"/></svg>
    <svg viewBox="0 0 16 14"><circle cx="8" cy="7" r="7" fill="#d6dc1c"/><path d="M2 4q7-6 12 1z" fill="#3a9b2c"/><path d="M9 4v5" stroke="#333" stroke-width="2"/></svg>
    <svg class="green"><use href="#w-bars"/></svg><svg class="dark"><use href="#w-bars"/></svg><svg><use href="#w-snd"/></svg>
  </div>
  <div class="clock"><time>11:11</time><time>2016/9/14</time></div>
  <button class="desk" aria-label="显示桌面"></button>
  <div class="mark3d">三维网www.3dportal.cn</div>
</footer>
</body>
</html>
```
FILE: styles.css
```css
* { box-sizing: border-box; }
body { margin: 0; height: 100vh; display: flex; flex-direction: column; overflow: hidden; background: #fff; color: #222; font: 11px/16px "Open Sans", "Noto Sans CJK SC", sans-serif; }
button { border: 0; padding: 0; margin: 0; background: none; color: inherit; font: inherit; display: flex; align-items: center; justify-content: center; flex: none; white-space: nowrap; }
svg { display: block; flex: none; }
h1, h2, h3, p { margin: 0; }
h1, h2, h3 { font-weight: normal; }
.defs { position: absolute; }

.titlebar { height: 26px; flex: none; display: flex; align-items: center; padding: 0 6px 0 4px; }
.logo { width: 37px; font: bold 22px/26px "Liberation Sans", sans-serif; color: #7f93a5; border-right: 1px solid #ddd; }
.title { font-size: 13px; margin-left: 5px; color: #111; }
.brand { margin-left: auto; margin-right: 23px; font-size: 13px; font-weight: 800; color: #149492; }
.winctl { display: flex; gap: 8px; color: #555; }
.winctl button { width: 15px; height: 15px; }
.winctl svg { width: 12px; height: 12px; }
.winctl.doc { margin-left: auto; gap: 3px; color: #111; }
.menubar { height: 27px; flex: none; display: flex; align-items: center; background: #c8d7d5; padding-right: 6px; }
.part { width: 16px; height: 16px; margin-right: 5px; }
.menubar > button { margin-right: 15px; padding-bottom: 2px; }
.menubar > .wide { margin-left: 5px; }
.menubar > .wide, .menubar > .wide ~ button { margin-right: 14px; }

.row { display: flex; flex: none; }
.group { display: flex; align-items: center; border-right: 1px solid #ddd; border-bottom: 1px solid #ddd; }
.grip { flex: none; width: 9px; align-self: stretch; margin: 3px 0; background: radial-gradient(circle at 4px 2px, #aaa 1px, transparent 2px) 0 0 / 9px 4px repeat-y; }
.std { height: 34px; }
.pad > .grip { margin-right: 2px; }
.tb { width: 31px; height: 32px; }
.tb svg, .launch svg, .bi svg, .finish svg { width: 24px; height: 24px; }
.launch { gap: 4px; }
.dd { flex: none; width: 12px; height: 20px; display: flex; align-items: center; justify-content: center; }
.dd::before { content: ""; border: 3px solid transparent; border-top-color: #111; border-bottom: 0; }
.dd.low { align-self: flex-end; height: 18px; }
.sep { flex: none; width: 1px; align-self: stretch; margin: 3px 2px 3px 3px; background: #ccc; }
.search { display: flex; align-items: center; width: 126px; height: 20px; margin: 0 4px 0 3px; border: 1px solid #999; }
.search input { flex: 1; min-width: 0; border: 0; padding: 0 0 0 1px; font: inherit; color: inherit; background: none; outline: 0; }
.search svg { width: 16px; height: 16px; margin-right: 2px; }

.big { height: 70px; align-items: flex-start; padding-right: 2px; }
.big > .grip { margin-right: 3px; }
.bt { width: 66px; height: 54px; }
.big .dd { height: 68px; justify-content: flex-start; }
.bi { width: 71px; height: 66px; margin-top: 2px; padding: 3px 6px 0; flex-direction: column; justify-content: flex-start; white-space: normal; text-align: center; }
.bi svg { margin-bottom: 4px; }
.bi ~ .dd { width: 11px; }
.bi.env { width: 60px; padding: 3px 2px 0; margin-right: 10px; }
.big .sep { margin-left: 2px; }
.big .dd.end { align-items: flex-end; padding-bottom: 6px; }
.on { background: #c8d7d5; box-shadow: inset 0 0 0 1px #afc3c0; }

.feat { height: 26px; margin-left: 12px; padding-right: 1px; }
.feat > .grip { margin-right: 2px; }
.feat button::after { content: ""; margin: 0 6px 0 5px; border: 3px solid transparent; border-top-color: #111; border-bottom: 0; }

.selbar { height: 32px; flex: none; display: flex; align-items: center; padding-left: 5px; border-bottom: 1px solid #888; }
.combo { position: relative; height: 20px; }
.combo::after { content: ""; position: absolute; right: 5px; top: 8px; border: 4px solid transparent; border-top-color: #111; border-bottom: 0; pointer-events: none; }
.combo select { appearance: none; width: 100%; height: 100%; border: 1px solid #999; border-radius: 0; background: #fff; padding: 0 2px; font: inherit; color: inherit; }
.c1 { width: 133px; margin-right: 7px; }
.c2 { width: 140px; margin-right: 3px; }
.sb { width: 23px; height: 22px; }
.sb.slim { width: 22px; }
.sb svg { width: 18px; height: 18px; }
.selbar .sep { margin-top: 4px; margin-bottom: 4px; }
.last { margin-left: auto; margin-right: 3px; }

.work { flex: 1; min-height: 0; display: flex; }
.resbar { width: 32px; flex: none; display: flex; flex-direction: column; background: #dcdcdc; border-right: 1px solid #a0a0a0; }
.resbar button { width: 31px; height: 42px; padding-left: 4px; }
.resbar svg { width: 24px; height: 24px; }
.resbar .gear { height: 26px; padding: 0 1px 0 0; margin-bottom: 4px; }
.resbar .gear svg { width: 15px; height: 15px; }
.resgroup { margin-top: 12px; }
.resgroup .on { position: relative; width: 30px; margin-left: 2px; padding-left: 0; background: #fff; box-shadow: -1px 0 #aaa, 0 1px #aaa, 0 -1px #aaa; }
.panel { width: 240px; flex: none; display: flex; flex-direction: column; padding: 0 9px 6px 6px; background: #fff; border-right: 1px solid #999; font-size: 12px; }
.phead { height: 28px; display: flex; align-items: center; justify-content: space-between; padding: 0 7px 0 4px; }
.phead h2 { font-size: 12px; }
.maxi { width: 12px; height: 11px; border: 1px solid #111; border-top-width: 2px; margin-top: 2px; }
.treebox { border: 1px solid #ccc; padding: 1px; }
.tree { width: 100%; table-layout: fixed; border-collapse: collapse; }
.tree th { height: 21px; padding: 0 6px; text-align: left; font-weight: normal; background: #efefef; border-bottom: 1px solid #ccc; }
.tree th:first-child { width: 157px; }
.tree tr > :first-child { border-right: 1px solid #ddd; }
.tree td { height: 20px; padding: 0 0 0 4px; border-bottom: 1px solid #e8e8e8; white-space: nowrap; overflow: hidden; line-height: 16px; }
.tree td:first-child { padding: 0; }
.tree .short td { height: 14px; border-bottom: 0; }
.tree tbody tr:nth-child(even) { background: #f8f8f8; }
.asc { display: inline-block; margin-left: 14px; border: 5px solid transparent; border-bottom-color: #222; border-top: 0; vertical-align: 1px; }
.node { display: flex; align-items: center; height: 19px; }
.node svg { width: 16px; height: 16px; margin-right: 2px; }
.node svg + svg { margin-left: -2px; }
.l1 { padding-left: 5px; }
.l2 { padding-left: 28px; }
.l2 svg { margin-left: 2px; }
.node input { appearance: none; width: 12px; height: 12px; margin: 0; border: 1px solid #111; background: #fff; display: grid; place-items: center; overflow: hidden; }
.node input:checked::before { content: "✔"; font: 11px/10px "DejaVu Sans", sans-serif; color: #18a33a; }
.ln { width: 12px; height: 19px; background: linear-gradient(#bbb, #bbb) 0 9px / 12px 1px no-repeat, linear-gradient(#bbb, #bbb) 0 0 / 1px 100% no-repeat; }
.ln.first { background: linear-gradient(#bbb, #bbb) 0 9px / 12px 1px no-repeat, linear-gradient(#bbb, #bbb) 0 100% / 1px 10px no-repeat; }
.ln.final { background: linear-gradient(#bbb, #bbb) 0 9px / 12px 1px no-repeat, linear-gradient(#bbb, #bbb) 0 0 / 1px 10px no-repeat; }
.l1 .ln { margin: 0 -1px 0 4px; }
.ex { width: 9px; height: 9px; margin-right: 6px; border: 1px solid #bbb; background: linear-gradient(#222, #222) center / 5px 1px no-repeat, #fff; }
.ex.plus { background: linear-gradient(#222, #222) center / 5px 1px no-repeat, linear-gradient(#222, #222) center / 1px 5px no-repeat, #fff; }
.cur { font-weight: bold; }
.scroll { height: 16px; flex: none; display: flex; align-items: center; padding: 0 6px; background: #ececec; }
.scroll i { border: 3px solid transparent; }
.scroll .left { border-right: 4px solid #222; border-left: 0; }
.scroll .right { border-left: 4px solid #222; border-right: 0; margin-left: auto; }
.thumb { height: 15px; margin-left: 8px; border: 1px solid #888; border-radius: 1px; background: repeating-linear-gradient(90deg, #666 0 1px, transparent 1px 3px) center / 8px 6px no-repeat, linear-gradient(#f8f8f8, #e2e2e4 50%, #cacace 50%, #d6d6da); }
.t1 { width: 71px; }
.t2 { width: 154px; }
.splitter { height: 5px; flex: none; margin-top: 1px; background: #d0d0d0; border-bottom: 1px solid #999; border-top: 1px solid #bbb; }
.sect { height: 24px; flex: none; padding: 2px 7px 0; font-size: 14px; line-height: 20px; color: #3b7fa3; border-bottom: 2px solid #ccc; }
.bare { padding-left: 6px; border: 0; }
.preview { flex: 1; min-height: 0; display: flex; flex-direction: column; padding-bottom: 15px; margin-bottom: 1px; border-left: 1px solid #ddd; border-bottom: 1px solid #ddd; }
.pbox { flex: 1; margin: 4px 0 0 11px; padding-left: 32px; display: flex; align-items: center; justify-content: center; border: 1px solid #d4d4d4; border-right: 0; }

.canvas { flex: 1; min-width: 0; position: relative; background: #000; overflow: hidden; }
.drawing { width: 100%; height: 100%; }
.dimline { fill: none; stroke: #666; stroke-width: 1; }
.dense { stroke: #444; stroke-width: 2; }
.lit { fill: none; stroke: #eee; stroke-width: 1; }
.cross { stroke: #fff; stroke-width: 1; }
.thick { fill: none; stroke: #fff; stroke-width: 2.5; }
.num { font: 16px "Liberation Sans", sans-serif; fill: #6a6a6a; }
.lit-t { fill: #fff; }
.mark { fill: none; stroke: #fdee18; stroke-width: 5; }
.triad { font: 12px "Liberation Sans", sans-serif; }
.speed { position: absolute; right: 52px; top: 239px; width: 110px; height: 38px; border-radius: 19px; display: flex; align-items: center; padding-left: 37px; background: linear-gradient(#fff, #ddd); }
.ball { position: absolute; left: -16px; top: -5px; width: 47px; height: 47px; border-radius: 50%; border: 2px solid #e4efe6; background: linear-gradient(#1d8a60, #0a6e48 58%, #4cc65a 58%, #5cd66a); color: #fff; font: 14px/42px "Liberation Sans", sans-serif; text-align: center; }
.rates { width: 44px; font-size: 10px; line-height: 15px; color: #111; }
.rates p { display: flex; justify-content: space-between; }
.up { color: #d4493c; }
.down { color: #2b8f4c; }
.boost { position: relative; width: 17px; height: 17px; margin-left: 5px; border-radius: 50%; background: linear-gradient(#fff, #fff) center / 9px 2px no-repeat, linear-gradient(#fff, #fff) center / 2px 9px no-repeat, #3b79c8; }
.boost::after { content: ""; position: absolute; right: -2px; top: -2px; width: 8px; height: 8px; border-radius: 50%; background: #d62a34; }

.bottombar { height: 35px; flex: none; display: flex; align-items: center; justify-content: flex-end; padding-right: 3px; border-bottom: 1px solid #aaa; }
.finish { gap: 4px; padding: 0 3px 0 4px; }
.status { height: 21px; flex: none; display: grid; grid-template-columns: 46% 1fr auto; align-items: center; padding: 0 0 2px 3px; color: #111; font-weight: bold; }
.sicons { display: flex; gap: 4px; margin-right: 55px; }
.sicons svg { width: 16px; height: 16px; }

.taskbar { position: relative; height: 40px; flex: none; display: flex; align-items: center; gap: 4px; background: linear-gradient(#3a4656 0 1px, #a4b2c4 1px 2px, #8295ac 2px); color: #fff; font-size: 12px; }
.start { width: 54px; }
.start svg { width: 37px; height: 37px; }
.task { width: 158px; height: 37px; gap: 8px; padding-left: 10px; justify-content: flex-start; border: 1px solid #4a5a70; border-radius: 3px; box-shadow: inset 0 0 0 1px #b4c0cf; background: linear-gradient(165deg, #adb9c8, #94a3b7 45%, #7f91a8 46%, #8a9bb1); }
.active { background: linear-gradient(165deg, #dde2e8, #bcc6d2 45%, #a5b2c2 46%, #b8c2cf); box-shadow: inset 0 0 0 1px #fff; }
.task svg { width: 28px; height: 32px; }
.tray { margin-left: auto; display: flex; gap: 9px; }
.tray svg { width: 16px; height: 14px; }
.green { color: #3a9c2a; }
.dark { color: #4c5866; }
.clock { width: 74px; text-align: center; line-height: 18px; }
.clock time { display: block; }
.desk { width: 14px; height: 38px; border: 1px solid #aab6c4; background: linear-gradient(#7587a0, #52637a 50%, #7587a0); }
.mark3d { position: absolute; right: 19px; bottom: 3px; font: 17px/20px "DejaVu Sans", "Noto Sans CJK SC", sans-serif; color: #fff; -webkit-text-stroke: 2px #e0262a; paint-order: stroke fill; white-space: nowrap; }
```
